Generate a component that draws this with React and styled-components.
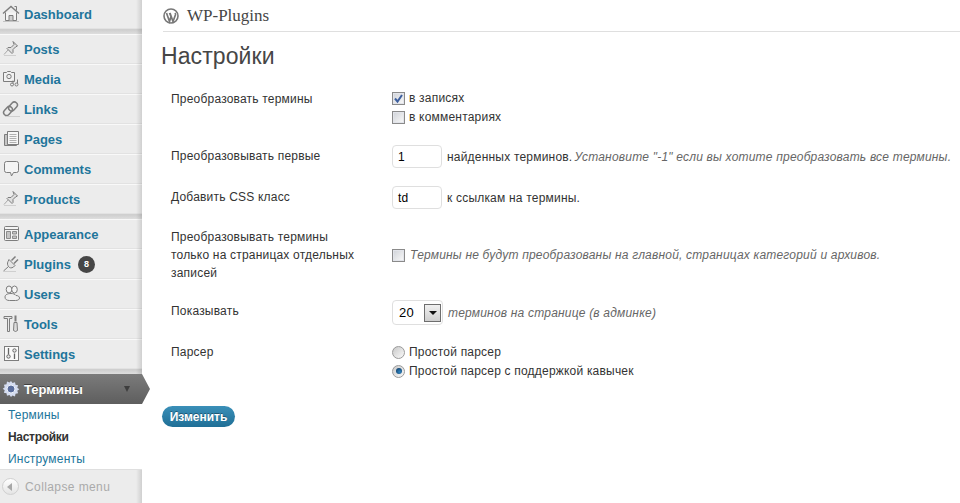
import styled, { createGlobalStyle } from "styled-components";

const GlobalStyle = createGlobalStyle`
  html, body { margin: 0; padding: 0; background: #fff; }
  body { font-family: "Liberation Sans", Arial, sans-serif; font-size: 12px; color: #333; }
`;

const Page = styled.div`
  display: flex;
  width: 960px;
  height: 503px;
  overflow: hidden;
`;

const Sidebar = styled.nav`
  position: relative;
  flex: none;
  display: flex;
  flex-direction: column;
  width: 142px;
  background: #ececec;
  &::after {
    content: "";
    position: absolute;
    top: 0;
    right: 0;
    width: 6px;
    height: 100%;
    background: linear-gradient(90deg, rgba(0, 0, 0, 0), rgba(0, 0, 0, 0.12));
    pointer-events: none;
  }
`;

const Item = styled.a`
  display: flex;
  align-items: center;
  height: 30px;
  flex: none;
  box-sizing: border-box;
  padding-left: 2px;
  margin-top: ${(p) => (p.$first ? "-1px" : "0")};
  border-top: 1px solid #f9f9f9;
  border-bottom: 1px solid #e2e2e2;
  font-weight: bold;
  font-size: 13px;
  color: #21759b;
`;

const IconSlot = styled.span`
  flex: none;
  display: flex;
  width: 18px;
  margin-right: 4px;
  svg { display: block; }
`;

const Count = styled.span`
  display: inline-flex;
  align-items: center;
  justify-content: center;
  width: 17px;
  height: 17px;
  margin-left: 7px;
  border-radius: 50%;
  background: #464646;
  color: #fff;
  font-size: 9px;
`;

const Separator = styled.div`
  flex: none;
  height: 5px;
  box-sizing: border-box;
  border-top: 1px solid #cfcfcf;
  background: linear-gradient(#cfcfcf, #dedede);
`;

const ActiveItem = styled.a`
  position: relative;
  z-index: 1;
  flex: none;
  display: flex;
  align-items: center;
  height: 30px;
  padding-left: 2px;
  background: linear-gradient(#7b7b7b, #5e5e5e);
  color: #fff;
  font-weight: bold;
  font-size: 13px;
  text-shadow: 0 -1px 0 #3f3f3f;
  &::after {
    content: "";
    position: absolute;
    left: 142px;
    top: 0;
    width: 8px;
    height: 30px;
    background: linear-gradient(#7b7b7b, #5e5e5e);
    clip-path: polygon(0 0, 100% 50%, 0 100%);
  }
`;

const Caret = styled.span`
  position: absolute;
  right: 12px;
  top: 12px;
  width: 0;
  height: 0;
  border-left: 3px solid transparent;
  border-right: 3px solid transparent;
  border-top: 6px solid #3e3e3e;
`;

const SubMenu = styled.ul`
  position: relative;
  z-index: 1;
  flex: none;
  list-style: none;
  margin: 0;
  padding: 0;
  height: 66px;
  box-sizing: border-box;
  background: #fff;
  border-bottom: 1px solid #dfdfdf;
`;

const SubItem = styled.li`
  height: 22px;
  line-height: 22px;
  padding-left: 8px;
  font-size: 12px;
  letter-spacing: ${(p) => (p.$current ? "-0.3px" : "0.2px")};
  font-weight: ${(p) => (p.$current ? "bold" : "normal")};
  color: ${(p) => (p.$current ? "#333" : "#21759b")};
`;

const Collapse = styled.div`
  display: flex;
  align-items: center;
  height: 34px;
  padding-left: 2px;
  color: #aaa;
  font-size: 12px;
  letter-spacing: 0.4px;
`;

const CollapseButton = styled.span`
  display: flex;
  align-items: center;
  justify-content: center;
  width: 15px;
  height: 15px;
  margin-right: 6px;
  border: 1px solid #d0d0d0;
  border-radius: 50%;
  background: linear-gradient(#fff, #e4e4e4);
  &::before {
    content: "";
    margin-left: -2px;
    border-top: 4px solid transparent;
    border-bottom: 4px solid transparent;
    border-right: 5px solid #a8a8a8;
  }
`;

const Main = styled.main`
  flex: 1;
  min-width: 0;
  padding-left: 20px;
`;

const SiteHeader = styled.header`
  display: flex;
  align-items: center;
  gap: 8px;
  height: 31px;
  margin-left: 1px;
  border-bottom: 1px solid #dfdfdf;
  font-family: "Liberation Serif", serif;
  font-size: 17px;
  color: #464646;
  svg { color: #777; }
`;

const Heading = styled.h2`
  margin: 9px 0 0 -1px;
  height: 30px;
  line-height: 30px;
  font-weight: normal;
  font-size: 23px;
  letter-spacing: 0.1px;
  color: #464646;
`;

const Form = styled.form`
  display: grid;
  grid-template-columns: 221px 1fr;
  padding: 18px 0 0 9px;
  letter-spacing: 0.2px;
`;

const Label = styled.div`
  line-height: 18px;
  padding-top: ${(p) => p.$top || 0}px;
  color: #333;
`;

const Field = styled.div`
  display: flex;
  flex-direction: ${(p) => (p.$stack ? "column" : "row")};
  align-items: ${(p) => (p.$stack ? "flex-start" : "center")};
  gap: ${(p) => (p.$stack ? "1px" : "0")};
  min-height: ${(p) => p.$h}px;
`;

const Option = styled.label`
  display: flex;
  align-items: center;
  height: 18px;
  color: #333;
`;

const Box = styled.span`
  flex: none;
  display: flex;
  width: 11px;
  height: 11px;
  margin-right: 4px;
  border: 1px solid #8a8a8a;
  box-shadow: inset 0 0 0 1px #e2e4ea;
  background: linear-gradient(135deg, #cfd2d8, #fafafa);
  svg { display: block; }
`;

const Radio = styled.span`
  flex: none;
  display: flex;
  align-items: center;
  justify-content: center;
  width: 11px;
  height: 11px;
  margin-right: 4px;
  border: 1px solid #9a9a9a;
  border-radius: 50%;
  background: linear-gradient(135deg, #c9c9c9, #fafafa);
  &::after {
    content: "";
    display: ${(p) => (p.$on ? "block" : "none")};
    width: 6px;
    height: 6px;
    border-radius: 50%;
    background: radial-gradient(circle at 60% 65%, #2f86c4, #0b2f55);
  }
`;

const Input = styled.span`
  box-sizing: border-box;
  display: flex;
  align-items: center;
  width: 50px;
  height: 23px;
  margin-right: 5px;
  padding-left: 5px;
  border: 1px solid #dfdfdf;
  border-radius: 4px;
  color: #000;
  font-size: 12px;
`;

const Select = styled.span`
  box-sizing: border-box;
  display: flex;
  align-items: center;
  justify-content: space-between;
  width: 51px;
  height: 25px;
  margin-right: 5px;
  padding: 0 1px 0 6px;
  border: 1px solid #dfdfdf;
  border-radius: 4px;
  color: #000;
  font-size: 13px;
`;

const SelectArrow = styled.span`
  box-sizing: border-box;
  display: flex;
  align-items: center;
  justify-content: center;
  width: 17px;
  height: 18px;
  border: 1px solid #6e6e6e;
  background: linear-gradient(#f0f0f0, #cfcfcf);
  &::after {
    content: "";
    border-left: 4px solid transparent;
    border-right: 4px solid transparent;
    border-top: 4px solid #111;
  }
`;

const Note = styled.em`
  color: #666;
  margin-left: ${(p) => p.$gap || 0}px;
  white-space: nowrap;
`;

const Plain = styled.span`
  white-space: nowrap;
`;

const Spacer = styled.div`
  grid-column: 1 / -1;
  height: ${(p) => p.$h}px;
`;

const Submit = styled.span`
  display: inline-flex;
  align-items: center;
  justify-content: center;
  width: 73px;
  height: 21px;
  margin-top: 26px;
  border-radius: 11px;
  background: linear-gradient(#3a8fb8, #1f6f96);
  color: #fff;
  font-weight: bold;
  font-size: 12px;
  text-shadow: 0 -1px 0 rgba(0, 0, 0, 0.35);
`;

const Glyph = ({ children }) => (
  <svg width="18" height="18" viewBox="0 0 18 18" fill="#ececec" stroke="#7d7d7d" strokeWidth="1">
    {children}
  </svg>
);

const icons = {
  home: (
    <Glyph>
      <path d="M12.500 1.500h2v4" />
      <path d="M3.500 7.500v8h11v-8" fill="#f4f4f4" />
      <path d="M1 8.500 9 1.500l8 7" fill="none" strokeWidth="1.400" />
      <path d="M7 15.500v-5h4v5" fill="#d0d0d0" />
      <path d="M1 16.500h16" stroke="#c4c4c4" />
    </Glyph>
  ),
  pin: (
    <Glyph>
      <path d="M11 1.500l4.500 4.500-2 1-2.500 2.500v3l-1 1-5-5 1-1h3L12 4.500z" fill="#e0e0e0" />
      <path d="M6 10l-4 4.500" stroke="#a8a8a8" />
      <path d="M2 15.500h12" stroke="#cfcfcf" />
    </Glyph>
  ),
  media: (
    <Glyph>
      <path d="M1.500 2.500h3l1-1h3l1 1h3v9h-11z" fill="#f1f1f1" />
      <circle cx="7" cy="6.500" r="2.200" />
      <path d="M11 10.500v4M15.500 9.500v5" />
      <circle cx="10" cy="14.500" r="1.500" />
      <circle cx="14.500" cy="14.500" r="1.500" />
    </Glyph>
  ),
  link: (
    <Glyph>
      <rect x="8" y="1.500" width="6" height="10" rx="3" transform="rotate(42 11 6.500)" fill="none" strokeWidth="1.500" />
      <rect x="3" y="6" width="6" height="10" rx="3" transform="rotate(42 6 11)" fill="none" strokeWidth="1.500" />
      <path d="M3 16.500h15" stroke="#cfcfcf" />
    </Glyph>
  ),
  pages: (
    <Glyph>
      <path d="M2.500 4.500h3v10h9v1h-12z" fill="#c4c4c4" />
      <path d="M5.500 1.500h11v13h-11z" fill="#f6f6f6" />
      <path d="M7.500 4.500h7M7.500 6.500h7M7.500 8.500h7M7.500 10.500h7M7.500 12.500h7" stroke="#b0b0b0" />
    </Glyph>
  ),
  comment: (
    <Glyph>
      <path d="M4.500 1.500h10a2 2 0 0 1 2 2v7a2 2 0 0 1-2 2h-3l-2 3.500-1-3.500h-4a2 2 0 0 1-2-2v-7a2 2 0 0 1 2-2z" fill="#f4f4f4" />
    </Glyph>
  ),
  appearance: (
    <Glyph>
      <rect x="2.500" y="1.500" width="14" height="14" rx="1" fill="#f4f4f4" />
      <path d="M2.500 4.500h14" />
      <path d="M4.500 6.500h4v7h-4zM10.500 6.500h4v2.500h-4zM10.500 11h4v2.500h-4z" fill="#c4c4c4" stroke="#8c8c8c" />
    </Glyph>
  ),
  plugin: (
    <Glyph>
      <path d="M7 4.500l6 6-1.500 1.500c-2 1.500-4 1-5-.5s-1.500-3-.5-5z" fill="#e4e4e4" />
      <path d="M9.500 5.500l4-4M12 8.500l4-4" strokeWidth="1.500" />
      <path d="M6.500 11.500l-5 4.500" />
      <path d="M1 16.500h13" stroke="#cfcfcf" />
    </Glyph>
  ),
  users: (
    <Glyph>
      <ellipse cx="7" cy="4.500" rx="2.800" ry="3.500" fill="#f4f4f4" />
      <ellipse cx="12.500" cy="4.500" rx="2.800" ry="3.500" fill="#f4f4f4" />
      <path d="M3 12c0-2.500 3-3.500 6-3.500 2 0 4 .5 5 2 2 0 3.500 1 3.500 2.500s-1.500 2.500-4 2.500h-6C5 15.500 3 14.500 3 12z" fill="#f0f0f0" />
    </Glyph>
  ),
  tools: (
    <Glyph>
      <path d="M2 1.500h8v2H7.500v13h-2v-13H2z" fill="#e8e8e8" />
      <path d="M13.500.5v6" strokeWidth="2" />
      <path d="M12 7.500h3l.5 8-2 1-2-1z" fill="#dcdcdc" />
    </Glyph>
  ),
  settings: (
    <Glyph>
      <rect x="2.500" y="1.500" width="14" height="14" fill="#fbfbfb" />
      <path d="M6.500 3v6.500M12.500 8.500V14" strokeWidth="1.300" stroke="#666" />
      <circle cx="6.500" cy="11.500" r="1.700" stroke="#666" />
      <circle cx="12.500" cy="5.500" r="1.700" stroke="#666" />
    </Glyph>
  ),
};

const Gear = () => (
  <svg width="18" height="18" viewBox="0 0 18 18">
    <path
      d="M9 1l1.500 2 2.500-.8.500 2.600 2.600.5-.8 2.500 2 1.500-2 1.500.8 2.500-2.600.5-.5 2.600-2.500-.8L9 17l-1.500-2-2.500.8-.5-2.600-2.600-.5.8-2.500-2-1.500 2-1.500-.8-2.500 2.600-.5.500-2.600 2.500.8z"
      fill="#d4dcf0"
    />
    <circle cx="9" cy="9" r="4" fill="#5a6d9c" stroke="#eef2fb" />
  </svg>
);

const WpLogo = () => (
  <svg width="16" height="16" viewBox="0 0 16 16" fill="none" stroke="currentColor">
    <circle cx="8" cy="8" r="7" strokeWidth="1.600" />
    <path d="M3.500 5 6.500 13.500l1.500-5-1.500-3.500M7 5l3 8.500 2.400-6.500c.3-1 0-1.500-.5-2" strokeWidth="1.700" />
  </svg>
);

const Check = () => (
  <svg width="11" height="11" viewBox="0 0 11 11" fill="none" stroke="#3d5f9e" strokeWidth="2">
    <path d="M2 5.500 4.500 8.500 9 2" />
  </svg>
);

const MenuItem = ({ icon, label, first, children }) => (
  <Item $first={first}>
    <IconSlot>{icons[icon]}</IconSlot>
    {label}
    {children}
  </Item>
);

const App = () => (
  <>
    <GlobalStyle />
    <Page>
      <Sidebar>
        <MenuItem first icon="home" label="Dashboard" />
        <Separator />
        <MenuItem icon="pin" label="Posts" />
        <MenuItem icon="media" label="Media" />
        <MenuItem icon="link" label="Links" />
        <MenuItem icon="pages" label="Pages" />
        <MenuItem icon="comment" label="Comments" />
        <MenuItem icon="pin" label="Products" />
        <Separator />
        <MenuItem icon="appearance" label="Appearance" />
        <MenuItem icon="plugin" label="Plugins">
          <Count>8</Count>
        </MenuItem>
        <MenuItem icon="users" label="Users" />
        <MenuItem icon="tools" label="Tools" />
        <MenuItem icon="settings" label="Settings" />
        <Separator />
        <ActiveItem>
          <IconSlot>
            <Gear />
          </IconSlot>
          Термины
          <Caret />
        </ActiveItem>
        <SubMenu>
          <SubItem>Термины</SubItem>
          <SubItem $current>Настройки</SubItem>
          <SubItem>Инструменты</SubItem>
        </SubMenu>
        <Collapse>
          <CollapseButton />
          Collapse menu
        </Collapse>
      </Sidebar>
      <Main>
        <SiteHeader>
          <WpLogo />
          WP-Plugins
        </SiteHeader>
        <Heading>Настройки</Heading>
        <Form>
          <Label $top={1}>Преобразовать термины</Label>
          <Field $stack>
            <Option>
              <Box>
                <Check />
              </Box>
              в записях
            </Option>
            <Option>
              <Box />
              в комментариях
            </Option>
          </Field>
          <Spacer $h={19} />

          <Label $top={2}>Преобразовывать первые</Label>
          <Field $h={23}>
            <Input>1</Input>
            <Plain>найденных терминов.</Plain>
            <Note $gap={2}>Установите "-1" если вы хотите преобразовать все термины.</Note>
          </Field>
          <Spacer $h={18} />

          <Label $top={2}>Добавить CSS класс</Label>
          <Field $h={23}>
            <Input>td</Input>
            <Plain>к ссылкам на термины.</Plain>
          </Field>
          <Spacer $h={19} />

          <Label>
            Преобразовывать термины
            <br />
            только на страницах отдельных
            <br />
            записей
          </Label>
          <Field $h={54}>
            <Box />
            <Note $gap={1}>Термины не будут преобразованы на главной, страницах категорий и архивов.</Note>
          </Field>
          <Spacer $h={18} />

          <Label $top={2}>Показывать</Label>
          <Field $h={25}>
            <Select>
              20
              <SelectArrow />
            </Select>
            <Note>терминов на странице (в админке)</Note>
          </Field>
          <Spacer $h={18} />

          <Label>Парсер</Label>
          <Field $stack>
            <Option>
              <Radio />
              Простой парсер
            </Option>
            <Option>
              <Radio $on />
              Простой парсер с поддержкой кавычек
            </Option>
          </Field>
        </Form>
        <Submit>Изменить</Submit>
      </Main>
    </Page>
  </>
);

export default App;
